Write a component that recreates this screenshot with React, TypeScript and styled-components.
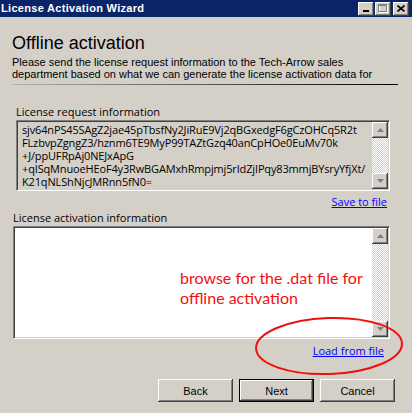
import React from "react";
import styled, { createGlobalStyle } from "styled-components";

const Global = createGlobalStyle`
  html, body { margin: 0; padding: 0; background: #d4d0c8; }
  body { width: 412px; height: 413px; overflow: hidden; }
`;

const FACE = "#d4d0c8";
const UI = `"Liberation Sans", Arial, sans-serif`;
const SEG = `"Open Sans", "Noto Sans", sans-serif`;

const Window = styled.div`
  position: relative;
  width: 412px;
  height: 413px;
  background: ${FACE};
  display: flex;
  flex-direction: column;
  overflow: hidden;
  font-family: ${UI};
  color: #000;
`;

const TitleBar = styled.div`
  height: 17px;
  flex: none;
  background: #0a246a;
  display: flex;
  align-items: center;
  justify-content: space-between;
  padding: 0 3px 0 1px;
`;

const Title = styled.span`
  color: #fff;
  font: bold 11px/17px ${UI};
  letter-spacing: 0.3px;
`;

const CaptionButtons = styled.div`
  display: flex;
  align-items: center;
  gap: 1px;
  & > :last-child { margin-left: 1px; }
`;

const CaptionButton = styled.div`
  width: 16px;
  height: 14px;
  box-sizing: border-box;
  background: ${FACE};
  box-shadow: inset -1px -1px #404040, inset 1px 1px #fff, inset -2px -2px #808080, inset 2px 2px ${FACE};
  display: flex;
  align-items: center;
  justify-content: center;
`;

const Content = styled.div`
  flex: 1;
  display: flex;
  flex-direction: column;
  padding: 0 14px 0 12px;
`;

const Heading = styled.div`
  margin-top: 16px;
  font-size: 18px;
  line-height: 21px;
`;

const Description = styled.div`
  margin-top: 2px;
  font-size: 11px;
  line-height: 12px;
`;

const Separator = styled.div`
  margin-top: 4px;
  height: 1px;
  background: linear-gradient(to right, #b4b0a8, #000);
`;

const Section = styled.div<{ $inset: number; $right: number }>`
  display: flex;
  flex-direction: column;
  padding-left: ${(p) => p.$inset}px;
  padding-right: ${(p) => p.$right}px;
`;

const Label = styled.div<{ $top: number }>`
  margin-top: ${(p) => p.$top}px;
  font: 11px/13px ${SEG};
`;

const Field = styled.div<{ $height: number; $bg: string }>`
  margin-top: 2px;
  height: ${(p) => p.$height}px;
  box-sizing: border-box;
  border: 1px solid;
  border-color: #808080 #fff #fff #808080;
  box-shadow: inset 1px 1px #404040, inset -1px -1px ${FACE};
  background: ${(p) => p.$bg};
  display: flex;
  padding: 1px;
`;

const FieldText = styled.div`
  flex: 1;
  padding: 1px 0 0 4px;
  font: 11px/13px ${SEG};
  letter-spacing: -0.15px;
  white-space: pre;
  overflow: hidden;
`;

const ScrollBar = styled.div`
  width: 16px;
  flex: none;
  display: flex;
  flex-direction: column;
`;

const ScrollTrack = styled.div`
  flex: 1;
  background-color: #fff;
  background-image: repeating-conic-gradient(${FACE} 0 25%, #fff 0 50%);
  background-size: 2px 2px;
`;

const ArrowButton = styled.div`
  height: 16px;
  flex: none;
  box-sizing: border-box;
  background: ${FACE};
  box-shadow: inset -1px -1px #404040, inset 1px 1px #fff, inset -2px -2px #808080, inset 2px 2px ${FACE};
  display: flex;
  align-items: center;
  justify-content: center;
`;

const LinkRow = styled.div<{ $top: number; $right: number }>`
  margin-top: ${(p) => p.$top}px;
  padding-right: ${(p) => p.$right}px;
  display: flex;
  justify-content: flex-end;
`;

const Link = styled.a`
  font: 11px/13px ${SEG};
  color: #0000ff;
  text-decoration: underline;
  cursor: pointer;
`;

const ButtonRow = styled.div`
  margin-top: 22px;
  margin-right: 3px;
  display: flex;
  justify-content: flex-end;
  gap: 6px;
`;

const Button = styled.button<{ $default?: boolean }>`
  width: 75px;
  height: 23px;
  box-sizing: border-box;
  margin: 0;
  padding: 0;
  border: ${(p) => (p.$default ? "1px solid #000" : "none")};
  background: ${FACE};
  box-shadow: ${(p) =>
    p.$default
      ? `inset -1px -1px #404040, inset 1px 1px #fff, inset -2px -2px #808080`
      : `inset -1px -1px #404040, inset 1px 1px #fff, inset -2px -2px #808080, inset 2px 2px ${FACE}`};
  font: 11px ${UI};
  color: #000;
`;

const Annotation = styled.div`
  position: absolute;
  left: 180px;
  top: 268px;
  font: 16px/20px Lato, "Open Sans", sans-serif;
  color: #f21010;
`;

const Circle = styled.svg`
  position: absolute;
  left: 253px;
  top: 315px;
  overflow: visible;
`;

const Arrow = ({ up }: { up?: boolean }) => (
  <svg width="7" height="4" viewBox="0 0 7 4">
    <polygon points={up ? "3.5,0 7,4 0,4" : "0,0 7,0 3.5,4"} fill="#808080" />
  </svg>
);

const Scroll = () => (
  <ScrollBar>
    <ArrowButton>
      <Arrow up />
    </ArrowButton>
    <ScrollTrack />
    <ArrowButton>
      <Arrow />
    </ArrowButton>
  </ScrollBar>
);

const requestLines = [
  "sjv64nPS45SAgZ2jae45pTbsfNy2JiRuE9Vj2qBGxedgF6gCzOHCq5R2t",
  "FLzbvpZgngZ3/hznm6TE9MyP99TAZtGzq40anCpHOe0EuMv70k",
  "+J/ppUFRpAj0NEJxApG",
  "+qISqMnuoeHEoF4y3RwBGAMxhRmpjmj5rIdZjIPqy83mmjBYsryYfjXt/",
  "K21qNLShNjcJMRnn5fN0=",
];

export default function App() {
  return (
    <>
      <Global />
      <Window>
        <TitleBar>
          <Title>License Activation Wizard</Title>
          <CaptionButtons>
            <CaptionButton>
              <svg width="8" height="8" viewBox="0 0 8 8">
                <rect x="1" y="5" width="6" height="2" fill="#000" />
              </svg>
            </CaptionButton>
            <CaptionButton>
              <svg width="10" height="9" viewBox="0 0 10 9">
                <rect x="1.5" y="1.5" width="8" height="7" fill="none" stroke="#fff" />
                <rect x="0.5" y="0.5" width="8" height="7" fill="none" stroke="#808080" />
                <rect x="1" y="1" width="7" height="1" fill="#808080" />
              </svg>
            </CaptionButton>
            <CaptionButton>
              <svg width="8" height="7" viewBox="0 0 8 7">
                <path d="M0.5 0.5 L7.5 6.5 M7.5 0.5 L0.5 6.5" stroke="#000" strokeWidth="1.6" />
              </svg>
            </CaptionButton>
          </CaptionButtons>
        </TitleBar>
        <Content>
          <Heading>Offline activation</Heading>
          <Description>
            Please send the license request information to the Tech-Arrow sales
            <br />
            department based on what we can generate the license activation data for
          </Description>
          <Separator />
          <Section $inset={4} $right={8}>
            <Label $top={20}>License request information</Label>
            <Field $height={71} $bg={FACE}>
              <FieldText>{requestLines.join("\n")}</FieldText>
              <Scroll />
            </Field>
            <LinkRow $top={4} $right={3}>
              <Link>Save to file</Link>
            </LinkRow>
          </Section>
          <Section $inset={1} $right={8}>
            <Label $top={3}>License activation information</Label>
            <Field $height={113} $bg="#fff">
              <FieldText />
              <Scroll />
            </Field>
            <LinkRow $top={5} $right={6}>
              <Link>Load from file</Link>
            </LinkRow>
          </Section>
          <ButtonRow>
            <Button>Back</Button>
            <Button $default>Next</Button>
            <Button>Cancel</Button>
          </ButtonRow>
        </Content>
        <Annotation>
          browse for the .dat file for
          <br />
          offline activation
        </Annotation>
        <Circle width="152" height="62" viewBox="0 0 152 62">
          <ellipse cx="76" cy="31" rx="73" ry="28" fill="none" stroke="#ee1010" strokeWidth="2" transform="rotate(-2 76 31)" />
        </Circle>
      </Window>
    </>
  );
}
